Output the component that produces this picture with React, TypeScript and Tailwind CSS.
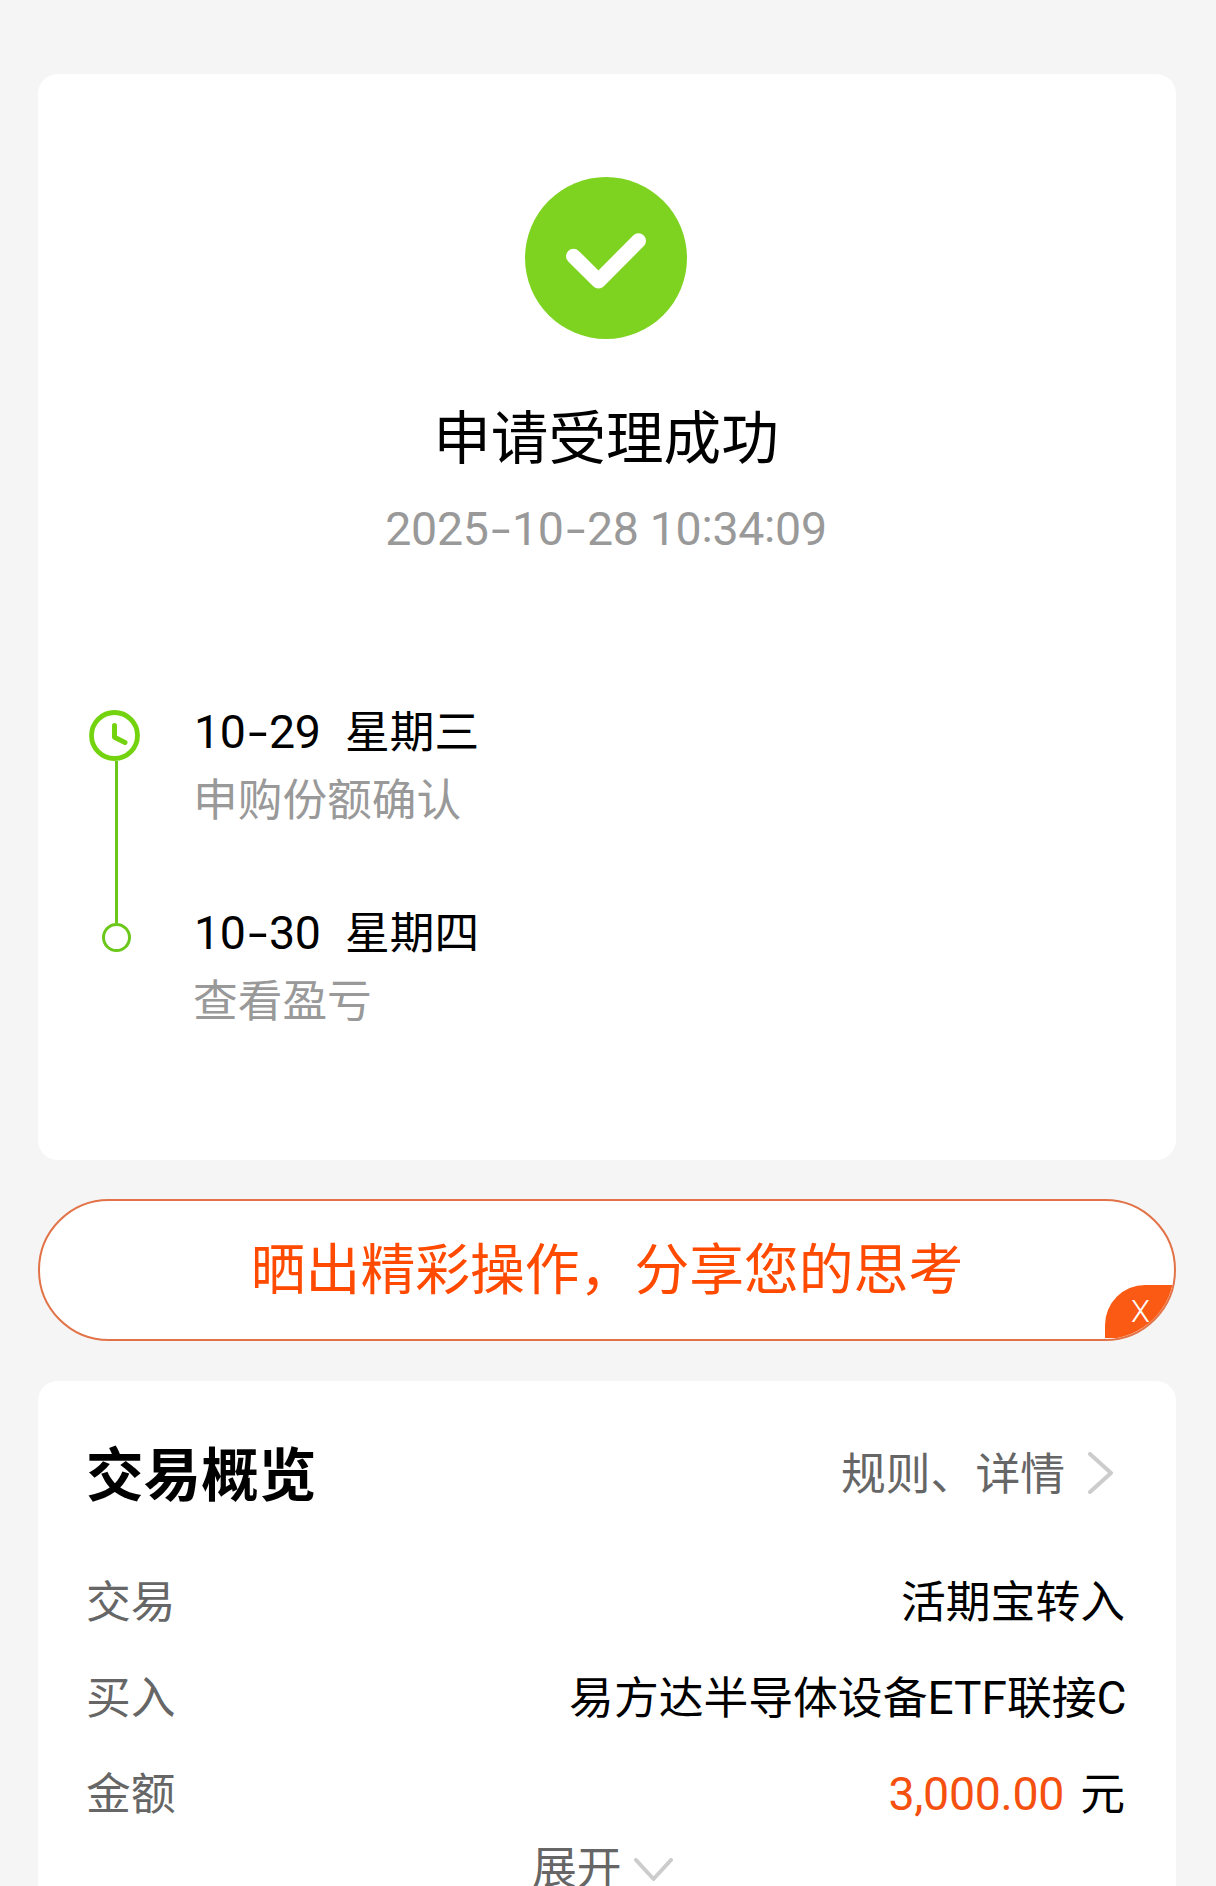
type Step = { date: string; day: string; note: string }

const steps: Step[] = [
  { date: '10-29', day: '星期三', note: '申购份额确认' },
  { date: '10-30', day: '星期四', note: '查看盈亏' },
]

// Digits with a wide dash and a vertically centred colon
const Digits = ({ value }: { value: string }) => (
  <span className="font-['Roboto',sans-serif] text-[46.5px] tracking-[-0.3px] whitespace-pre">
    {value.split(/([-:])/).map((part, i) => {
      if (part === '-')
        return (
          <span key={i} className="inline-block w-[23.3px] scale-x-150 text-center">
            -
          </span>
        )
      if (part === ':')
        return (
          <span key={i} className="relative -top-[3.5px]">
            :
          </span>
        )
      return <span key={i}>{part}</span>
    })}
  </span>
)

const SuccessIcon = () => (
  <svg className="size-[162px]" viewBox="0 0 162 162" fill="none">
    <circle cx="81" cy="81" r="81" fill="#7ed321" />
    <path
      d="M48.5 79.2 73.5 104 113.5 63.8"
      stroke="#fff"
      strokeWidth="15"
      strokeLinecap="round"
      strokeLinejoin="round"
    />
  </svg>
)

const ClockIcon = () => (
  <svg className="size-[51px]" viewBox="0 0 51 51" fill="none" stroke="#74d30f">
    <circle cx="25.5" cy="25.5" r="23" strokeWidth="4.8" />
    <path d="M25.5 15.5V27.2L36 32.5" strokeWidth="5" strokeLinecap="round" strokeLinejoin="round" />
  </svg>
)

const App = () => (
  <div className="flex h-[1886px] w-[1216px] flex-col overflow-hidden bg-[#f5f5f5] pr-10 pl-[38px] pt-[74px] font-['Inter','Noto_Sans_CJK_SC',sans-serif] text-black">
    <section className="flex h-[1086px] shrink-0 flex-col rounded-[20px] bg-white pt-[103px]">
      <div className="flex flex-col items-center pr-0.5">
        <SuccessIcon />
        <h1 className="mt-[59px] text-[57.6px] leading-[80px]">申请受理成功</h1>
        <p className="mt-5 text-[46px] leading-[60px] text-[#999]">
          <Digits value="2025-10-28 10:34:09" />
        </p>
      </div>
      <div className="mt-[143px] flex pl-[51px]">
        <div className="flex w-[51px] shrink-0 flex-col pt-2">
          <ClockIcon />
          <div className="ml-[26px] h-[162px] w-[3px] bg-[#6bc81a]"></div>
          <div className="ml-[13px] size-[29px] rounded-full border-[3px] border-[#6bc81a]"></div>
        </div>
        <ul className="ml-[53px] flex flex-col gap-[73px] text-[44.7px] leading-[60px]">
          {steps.map((step) => (
            <li key={step.date} className="flex flex-col gap-2">
              <div className="flex">
                <span className="w-[152px] pl-px">
                  <Digits value={step.date} />
                </span>
                <span>{step.day}</span>
              </div>
              <span className="text-[#999]">{step.note}</span>
            </li>
          ))}
        </ul>
      </div>
    </section>

    <section className="relative mt-[39px] flex h-[142px] shrink-0 items-center justify-center overflow-hidden rounded-full border-2 border-[#e27348] bg-white">
      <p className="pb-[3px] text-[54.8px] leading-[80px] text-[#ff4a00]">晒出精彩操作，分享您的思考</p>
      <button className="absolute right-0 bottom-px h-[53px] w-[69px] rounded-tl-[40px] bg-[#fb5a14] pr-3.5 text-right font-['Roboto',sans-serif] text-[31px] leading-[53px] font-light text-white">
        <span className="mr-2.5">X</span>
      </button>
    </section>

    <section className="mt-10 flex h-[600px] shrink-0 flex-col rounded-t-[20px] bg-white pr-[51px] pl-12 pt-[52px] text-[44.8px] leading-[60px]">
      <div className="flex h-20 items-center justify-between">
        <h2 className="pt-1 text-[57.6px] leading-[80px] font-bold">交易概览</h2>
        <div className="flex items-center gap-[23px] pr-[11px] text-[#666]">
          <span className="pt-0.5">规则、详情</span>
          <svg className="h-[42px] w-[26px]" viewBox="0 0 26 42" fill="none" stroke="#ccc" strokeWidth="4">
            <path d="M2 2 23 21 2 40" strokeLinecap="round" strokeLinejoin="round" />
          </svg>
        </div>
      </div>
      <dl className="mt-[59px] flex flex-col gap-9">
        <div className="flex justify-between">
          <dt className="text-[#666]">交易</dt>
          <dd>活期宝转入</dd>
        </div>
        <div className="flex justify-between">
          <dt className="text-[#666]">买入</dt>
          <dd>
            易方达半导体设备
            <span className="font-['Roboto',sans-serif] text-[46px]">ETF</span>
            联接
            <span className="font-['Roboto',sans-serif] text-[46px] tracking-[-1.5px]">C</span>
          </dd>
        </div>
        <div className="flex justify-between">
          <dt className="text-[#666]">金额</dt>
          <dd className="flex">
            <span className="mr-4 text-[#f5500f]">
              <Digits value="3,000.00" />
            </span>
            <span>元</span>
          </dd>
        </div>
      </dl>
      <button className="mt-3.5 ml-[446px] flex items-center gap-3 self-start text-[#666]">
        <span>展开</span>
        <svg className="mt-1 h-6 w-[39px]" viewBox="0 0 39 24" fill="none" stroke="#ccc" strokeWidth="4">
          <path d="M2 2 19.5 21 37 2" strokeLinecap="round" strokeLinejoin="round" />
        </svg>
      </button>
    </section>
  </div>
)

export default App
